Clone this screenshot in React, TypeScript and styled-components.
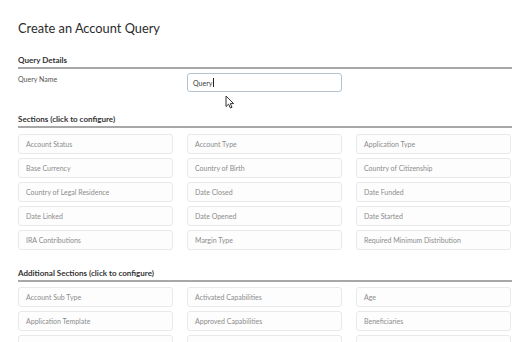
import React from "react";
import styled, { createGlobalStyle } from "styled-components";

const GlobalStyle = createGlobalStyle`
  html, body {
    margin: 0;
    padding: 0;
    background: #ffffff;
  }
  body {
    font-family: Lato, "Open Sans", "Liberation Sans", sans-serif;
    -webkit-font-smoothing: antialiased;
  }
`;

const Page = styled.div`
  position: relative;
  width: 494px;
  height: 342px;
  overflow: hidden;
  padding: 0 17px 0 18px;
`;

const Title = styled.h1`
  margin: 20px 0 0;
  font-size: 12.8px;
  line-height: 16px;
  font-weight: 400;
  color: #2b2b2b;
`;

const SectionHeader = styled.h2<{ $top: number }>`
  margin: ${(p) => p.$top}px 0 0;
  padding-bottom: 2px;
  font-size: 8px;
  line-height: 10px;
  font-weight: 700;
  color: #333333;
  border-bottom: 2px solid #a8a8a8;
`;

const Grid = styled.div<{ $top: number }>`
  display: grid;
  grid-template-columns: repeat(3, 155px);
  column-gap: 14px;
  row-gap: 4px;
  margin-top: ${(p) => p.$top}px;
`;

const FieldLabel = styled.div`
  font-size: 7px;
  line-height: 12px;
  color: #555555;
`;

const FakeInput = styled.div`
  box-sizing: border-box;
  height: 19px;
  border: 1px solid #b3c2cf;
  border-radius: 3px;
  padding: 0 5px;
  display: flex;
  align-items: center;
  font-size: 7px;
  color: #3a3a3a;
`;

const Caret = styled.span`
  display: inline-block;
  width: 1px;
  height: 9px;
  margin-left: 1px;
  background: #222222;
`;

const Cell = styled.div`
  box-sizing: border-box;
  height: 20px;
  border: 1px solid #e9e9e9;
  border-radius: 3px;
  background: #fdfdfd;
  padding: 0 7px;
  display: flex;
  align-items: center;
  font-size: 7px;
  color: #8c8c8c;
  white-space: nowrap;
`;

const Pointer = styled.svg`
  position: absolute;
  left: 225px;
  top: 95px;
`;

const sections = [
  "Account Status",
  "Account Type",
  "Application Type",
  "Base Currency",
  "Country of Birth",
  "Country of Citizenship",
  "Country of Legal Residence",
  "Date Closed",
  "Date Funded",
  "Date Linked",
  "Date Opened",
  "Date Started",
  "IRA Contributions",
  "Margin Type",
  "Required Minimum Distribution",
];

const additional = [
  "Account Sub Type",
  "Activated Capabilities",
  "Age",
  "Application Template",
  "Approved Capabilities",
  "Beneficiaries",
  "",
  "",
  "",
];

export default function App() {
  return (
    <>
      <GlobalStyle />
      <Page>
        <Title>Create an Account Query</Title>

        <SectionHeader $top={19}>Query Details</SectionHeader>
        <Grid $top={4}>
          <FieldLabel>Query Name</FieldLabel>
          <FakeInput>
            Query
            <Caret />
          </FakeInput>
        </Grid>

        <SectionHeader $top={22}>Sections (click to configure)</SectionHeader>
        <Grid $top={6}>
          {sections.map((s) => (
            <Cell key={s}>{s}</Cell>
          ))}
        </Grid>

        <SectionHeader $top={18}>Additional Sections (click to configure)</SectionHeader>
        <Grid $top={5}>
          {additional.map((s, i) => (
            <Cell key={i}>{s}</Cell>
          ))}
        </Grid>

        <Pointer width="10" height="14" viewBox="0 0 10 14">
          <path
            d="M1 1 L1 11.5 L3.6 9.2 L5.4 13 L7 12.3 L5.3 8.6 L8.6 8.6 Z"
            fill="#ffffff"
            stroke="#333333"
            strokeWidth="1"
            strokeLinejoin="round"
          />
        </Pointer>
      </Page>
    </>
  );
}
